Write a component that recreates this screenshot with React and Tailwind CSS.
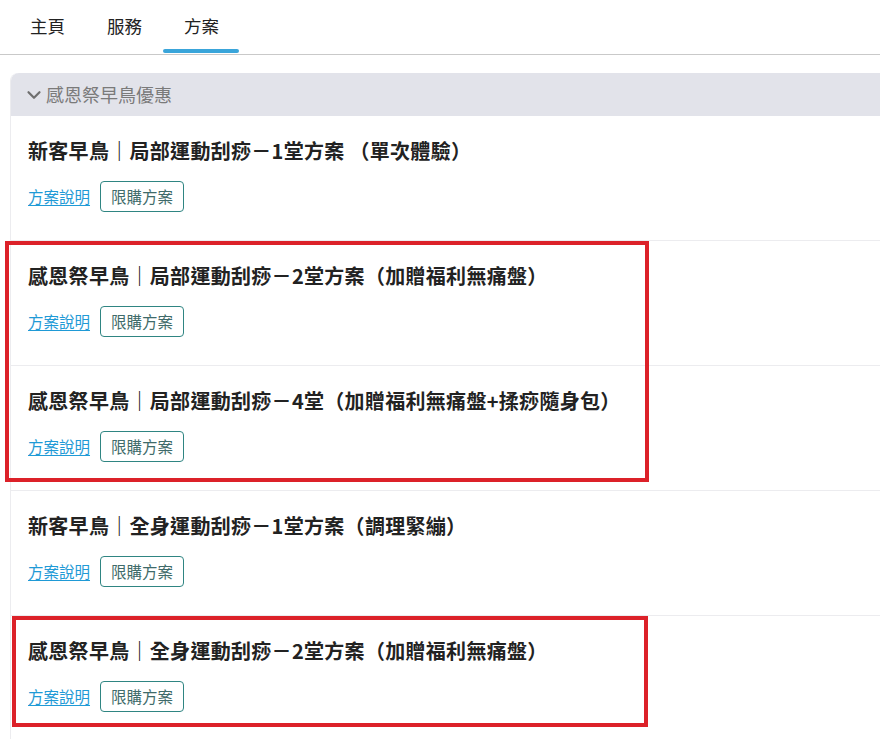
import { ChevronDown } from 'lucide-react';

const tabs = ['主頁', '服務', '方案'];

const plans = [
  '新客早鳥｜局部運動刮痧－1堂方案 （單次體驗）',
  '感恩祭早鳥｜局部運動刮痧－2堂方案（加贈福利無痛盤）',
  '感恩祭早鳥｜局部運動刮痧－4堂（加贈福利無痛盤+揉痧隨身包）',
  '新客早鳥｜全身運動刮痧－1堂方案（調理緊繃）',
  '感恩祭早鳥｜全身運動刮痧－2堂方案（加贈福利無痛盤）',
];

function PlanRow({ title }) {
  return (
    <div className="h-[125px] border-b border-[#ececef] bg-white pl-[17px] pt-[21px]">
      <h3 className="text-[20px] font-bold leading-[28px] tracking-[0.3px] text-[#222]">{title}</h3>
      <div className="mt-[16px] flex items-center gap-[10px]">
        <a href="#" className="text-[15.5px] text-[#1f9ad6] underline underline-offset-2">
          方案說明
        </a>
        <button
          type="button"
          className="h-[31px] rounded-[4px] border border-[#2f8582] px-[10px] text-[15.5px] text-[#3f6b6a]"
        >
          限購方案
        </button>
      </div>
    </div>
  );
}

export default function App() {
  return (
    <div
      className="relative h-[739px] overflow-hidden bg-white"
      style={{ fontFamily: '"Noto Sans CJK TC", "Noto Sans", sans-serif' }}
    >
      <nav className="flex h-[55px] border-b border-[#c9c9c9] pl-[9px]">
        {tabs.map((tab, i) => (
          <div key={tab} className="relative flex w-[77px] items-center justify-center pb-[2px] text-[17.5px] text-[#222]">
            {tab}
            {i === 2 && (
              <span className="absolute bottom-[1px] left-0 h-[4px] w-[76px] rounded-full bg-[#3aa5da]" />
            )}
          </div>
        ))}
      </nav>

      <section className="ml-[10px] mt-[18px] rounded-tl-[8px] border-l border-[#ececef]">
        <div className="flex h-[43px] items-center gap-[1px] rounded-tl-[8px] bg-[#e2e3ea] pl-[12px]">
          <ChevronDown size={22} strokeWidth={2.4} className="text-[#6f6f6f]" />
          <span className="text-[18px] text-[#7a7a7a]">感恩祭早鳥優惠</span>
        </div>
        {plans.map((p) => (
          <PlanRow key={p} title={p} />
        ))}
      </section>

      {/* annotation boxes */}
      <div className="pointer-events-none absolute left-[5px] top-[241px] h-[241px] w-[644px] border-[4px] border-[#dc2129]" />
      <div className="pointer-events-none absolute left-[12px] top-[616px] h-[111px] w-[636px] border-[4px] border-[#dc2129]" />
    </div>
  );
}
